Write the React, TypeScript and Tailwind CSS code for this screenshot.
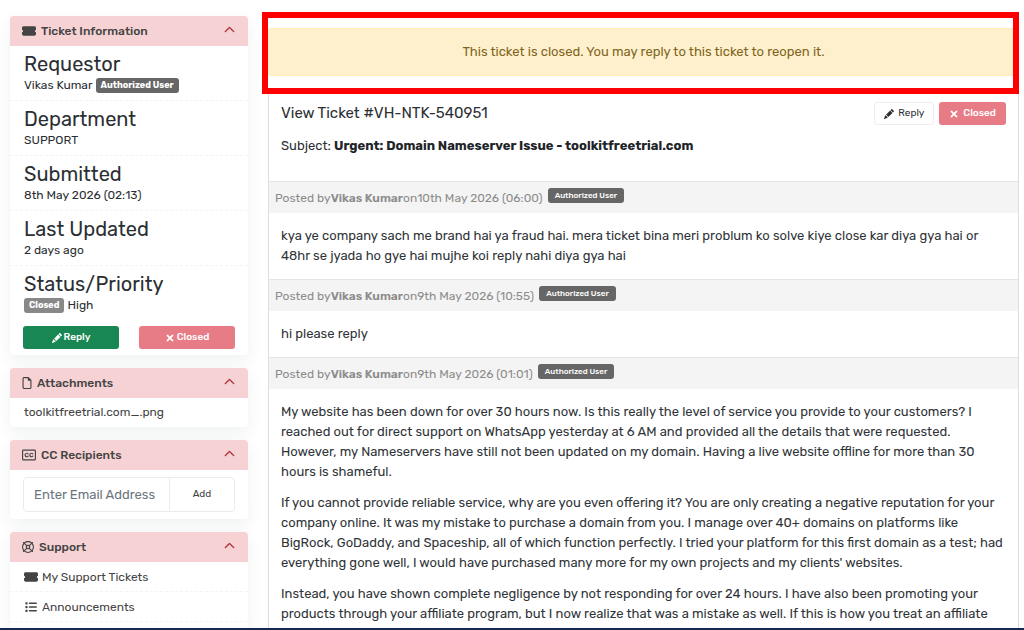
import type { ReactNode } from "react";
import { FaList, FaRegClosedCaptioning, FaRegFile, FaRegLifeRing, FaTicketSimple, FaXmark } from "react-icons/fa6";
import { BsChevronUp, BsPencilFill } from "react-icons/bs";

function Panel({ icon, title, children }: { icon: ReactNode; title: string; children: ReactNode }) {
  return (
    <section className="overflow-clip rounded-[4px] bg-white shadow-[0_6px_16px_rgba(30,60,60,0.07)]">
      <button type="button" className="flex h-[30px] w-full items-center gap-1 bg-[#f7d2d5] px-3 text-left">
        {icon}
        <span className="flex-1 text-[12px] font-medium text-[#444]">{title}</span>
        <BsChevronUp className="mr-px mb-1 size-[11px] text-[#a8202c]" strokeWidth={1} />
      </button>
      {children}
    </section>
  );
}

function Info({ label, children }: { label: string; children: ReactNode }) {
  return (
    <div className="px-[14px] py-[6px]">
      <dt className="text-[20px] leading-6">{label}</dt>
      <dd className="flex h-[18px] items-center gap-[3px] text-[12px] leading-[18px]">{children}</dd>
    </div>
  );
}

function Post({ date, children }: { date: string; children: ReactNode }) {
  return (
    <article>
      <header className="flex h-8 items-center border-t border-[#e6e6e6] bg-[#f4f4f4] px-[6px] text-[12px] text-[#8c8c8c]">
        <span>Posted by</span>
        <b className="font-semibold">Vikas Kumar</b>
        <span>on{date}</span>
        <span className="mb-1 ml-[5px] rounded-[3px] bg-[#666] px-[7px] text-[8px] leading-[15px] font-medium text-white">Authorized User</span>
      </header>
      <div className="flex flex-col gap-[11px] px-3 py-[13px] text-[13px] leading-5 text-[#303438]">{children}</div>
    </article>
  );
}

export default function App() {
  return (
    <div className="flex h-screen flex-col overflow-hidden bg-white font-[Rubik,Roboto,sans-serif] text-[#2b2f33]">
      <div className="flex min-h-0 flex-1 items-start gap-[14px] overflow-hidden pr-[5px] pl-[10px]">
        <aside className="mt-4 flex w-[238px] shrink-0 flex-col gap-[13px]">
          <Panel title="Ticket Information" icon={<FaTicketSimple className="mr-px size-[14px] text-[#444]" />}>
            <dl className="divide-y divide-dashed divide-[#f4f4f4]">
              <Info label="Requestor">
                Vikas Kumar
                <span className="rounded-[3px] bg-[#666] px-[5px] text-[9px] leading-[15px] font-bold text-white">Authorized User</span>
              </Info>
              <Info label="Department">SUPPORT</Info>
              <Info label="Submitted">8th May 2026 (02:13)</Info>
              <Info label="Last Updated">2 days ago</Info>
              <Info label="Status/Priority">
                <span className="rounded-[3px] bg-[#888] px-[5px] text-[9px] leading-[15px] font-bold text-white">Closed</span>
                High
              </Info>
            </dl>
            <div className="grid grid-cols-2 gap-5 px-[13px] py-[6px] text-[10px] font-medium text-white">
              <button type="button" className="flex h-[23px] items-center justify-center gap-0.5 rounded-[3px] bg-[#198754]">
                <BsPencilFill className="size-[10px]" />Reply
              </button>
              <button type="button" className="flex h-[23px] items-center justify-center gap-0.5 rounded-[3px] bg-[#e87c86]">
                <FaXmark className="size-[10px]" strokeWidth={30} />Closed
              </button>
            </div>
          </Panel>

          <Panel title="Attachments" icon={<FaRegFile className="-ml-px size-3 text-[#444]" />}>
            <a href="#attachment" className="block px-[14px] text-[12px] leading-[29px] text-[#444]">toolkitfreetrial.com_.png</a>
          </Panel>

          <Panel title="CC Recipients" icon={<FaRegClosedCaptioning className="mr-px size-[14px] text-[#444]" />}>
            <form className="flex px-[13px] py-[7px]">
              <input type="email" aria-label="Email address" placeholder="Enter Email Address" className="h-[35px] min-w-0 flex-1 rounded-l-[4px] border border-[#e9ebed] px-[10px] text-[13px] placeholder:text-[#6c757d]" />
              <button type="button" className="-ml-px w-[66px] rounded-r-[4px] border border-[#e9ebed] text-[10px] text-[#444]">Add</button>
            </form>
          </Panel>

          <Panel title="Support" icon={<FaRegLifeRing className="mr-px size-3 text-[#444]" />}>
            <nav className="pb-3 text-[12px] text-[#444]">
              <a href="#tickets" className="flex h-[30px] items-center gap-1 border-b border-dashed border-[#f4f4f4] px-[14px]"><FaTicketSimple className="size-[14px]" />My Support Tickets</a>
              <a href="#announcements" className="flex h-[30px] items-center gap-1 border-b border-dashed border-[#f4f4f4] px-[14px]"><FaList className="size-[14px] p-px" />Announcements</a>
            </nav>
          </Panel>
        </aside>

        <main className="mt-3 min-w-0 flex-1">
          <div className="border-[6px] border-[#fe0000] pt-[10px] pb-3">
            <p role="alert" className="rounded-l-[3px] border-y border-[#ffecb5] bg-[#fff0cd] pl-[6px] text-center text-[13px] leading-[46px] text-[#806520]">
              This ticket is closed. You may reply to this ticket to reopen it.
            </p>
          </div>
          <div className="ml-[6px] border-x border-[#dedede]">
            <div className="h-[87px] px-3 pt-2">
              <div className="flex items-start justify-between">
                <h1 className="text-[15px] leading-[22px]">View Ticket #VH-NTK-540951</h1>
                <div className="flex gap-[5px] text-[10px]">
                  <button type="button" className="flex h-[23px] items-center gap-1 rounded-[3px] border border-[#eee] px-[9px]">
                    <BsPencilFill className="size-[10px]" />Reply
                  </button>
                  <button type="button" className="flex h-[23px] items-center gap-1 rounded-[3px] bg-[#e87c86] px-[10px] font-medium text-white">
                    <FaXmark className="size-[10px]" strokeWidth={30} />Closed
                  </button>
                </div>
              </div>
              <p className="mt-[11px] text-[13px] leading-5">Subject: <b className="font-bold text-[#212529]">Urgent: Domain Nameserver Issue - toolkitfreetrial.com</b></p>
            </div>
            <Post date="10th May 2026 (06:00)">
              <p>kya ye company sach me brand hai ya fraud hai. mera ticket bina meri problum ko solve kiye close kar diya gya hai or 48hr se jyada ho gye hai mujhe koi reply nahi diya gya hai</p>
            </Post>
            <Post date="9th May 2026 (10:55)"><p>hi please reply</p></Post>
            <Post date="9th May 2026 (01:01)">
              <p>My website has been down for over 30 hours now. Is this really the level of service you provide to your customers? I reached out for direct support on WhatsApp yesterday at 6 AM and provided all the details that were requested. However, my Nameservers have still not been updated on my domain. Having a live website offline for more than 30 hours is shameful.</p>
              <p>If you cannot provide reliable service, why are you even offering it? You are only creating a negative reputation for your company online. It was my mistake to purchase a domain from you. I manage over 40+ domains on platforms like BigRock, GoDaddy, and Spaceship, all of which function perfectly. I tried your platform for this first domain as a test; had everything gone well, I would have purchased many more for my own projects and my clients' websites.</p>
              <p>Instead, you have shown complete negligence by not responding for over 24 hours. I have also been promoting your products through your affiliate program, but I now realize that was a mistake as well. If this is how you treat an affiliate</p>
            </Post>
          </div>
        </main>
      </div>
      <footer className="h-0.5 shrink-0 bg-[#1d2650]" />
    </div>
  );
}
